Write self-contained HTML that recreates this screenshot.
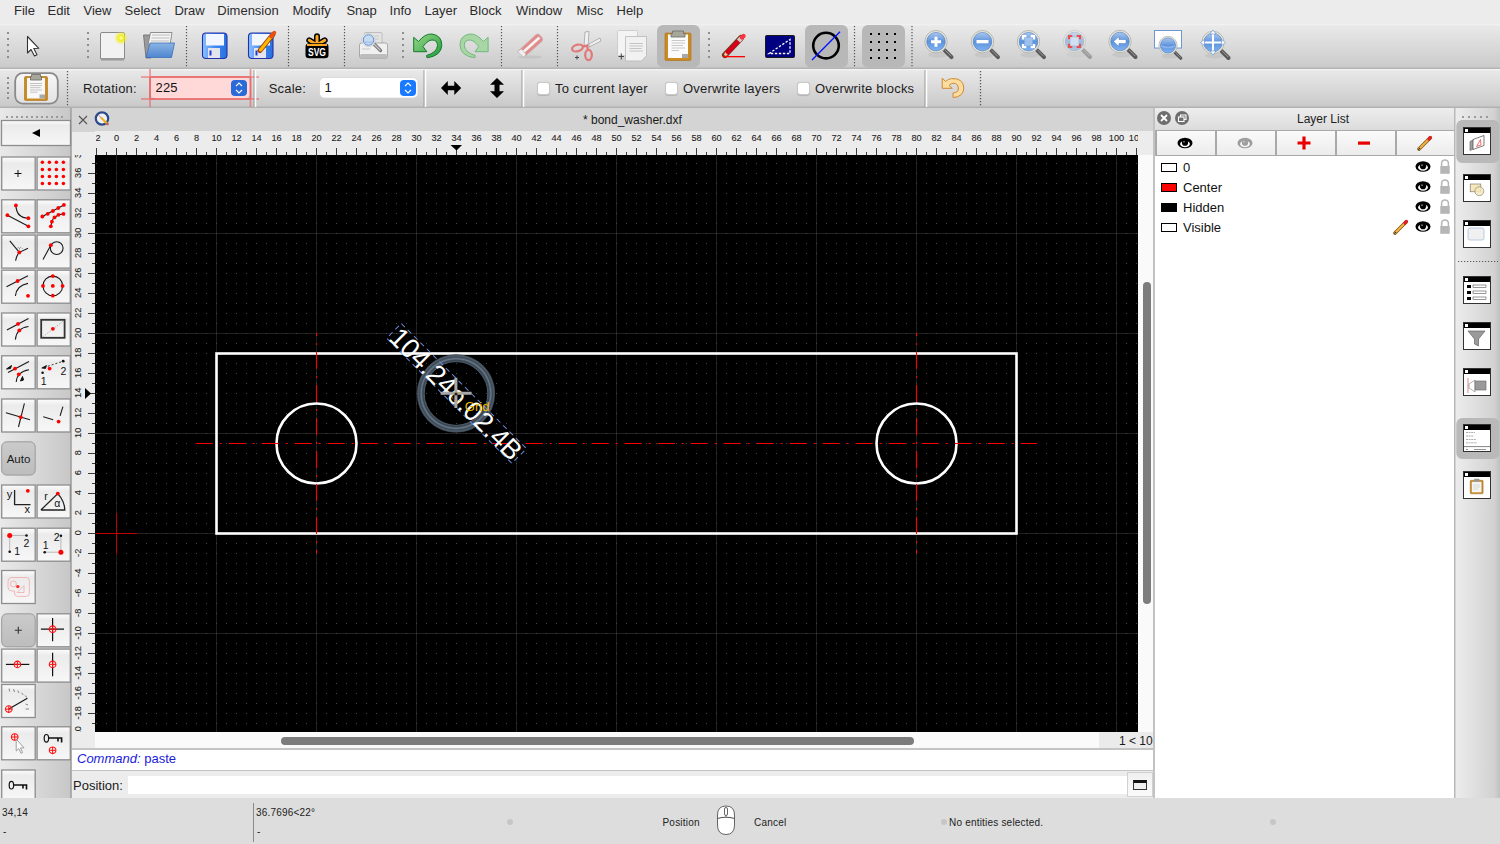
<!DOCTYPE html>
<html><head><meta charset="utf-8">
<style>
*{margin:0;padding:0;box-sizing:border-box}
html,body{width:1500px;height:844px;overflow:hidden;background:#ececec;font-family:"Liberation Sans",sans-serif;color:#222;position:relative}
.a{position:absolute}
.menu span{position:absolute;top:3px;font-size:13px;color:#2b2b2b;line-height:15px}
.tb1{left:0;top:24px;width:1500px;height:45px;background:linear-gradient(#f3f3f3 0,#e9e9e9 2px,#cbcbcb 43px,#b2b2b2 44px,#b6b6b6 45px)}
.tb2{left:0;top:69px;width:1500px;height:39px;background:linear-gradient(#f6f6f6 0,#e8e8e8 2px,#cacaca 37px,#b0b0b0 38px,#b3b3b3 39px)}
.grip{position:absolute;width:2px;background:repeating-linear-gradient(#999 0 2px,transparent 2px 5px)}
.sep{position:absolute;width:1px;background:repeating-linear-gradient(#6a6a6a 0 1px,transparent 1px 3px)}
.act{position:absolute;background:#b9b9b9;border-radius:6px}
.lbl{position:absolute;font-size:13px;color:#1d1d1d;line-height:15px;letter-spacing:.2px}
.tbox{left:0;top:108px;width:72px;height:690px;background:linear-gradient(90deg,#e9e9e9,#c8c8c8 69.5px,#a6a6a6 70.5px,#b4b4b4 72px)}
.btn{position:absolute;width:35px;height:34px;border:1px solid #8f8f8f;background:linear-gradient(#fbfbfb,#ebebeb 50%,#e3e3e3)}
.btn svg{position:absolute;left:0;top:0}
.chk{position:absolute;width:13px;height:13px;background:#fff;border:1px solid #c9c9c9;border-radius:3px;box-shadow:0 0.5px 1px rgba(0,0,0,.15)}
.status{left:0;top:798px;width:1500px;height:46px;background:#dddddd}
.st{position:absolute;font-size:10px;color:#222;line-height:12px;letter-spacing:.2px}
.lrow{position:absolute;left:0;width:298px;height:20px}
.lrow .sw{position:absolute;left:6px;top:4px;width:16px;height:9px;border:1px solid #000}
.lrow .nm{position:absolute;left:28px;top:1px;font-size:13px;color:#111;line-height:15px}
.dockic{position:absolute;left:9px;width:27.5px;height:28px;border:1px solid #333;background:#fff}
.dockic:before{content:"";position:absolute;left:0;top:0;right:0;height:4.5px;background:#000}
.dockic:after{content:"";position:absolute;left:1px;top:.8px;width:3px;height:3px;background:#fff}
</style></head><body>
<!-- menu bar -->
<div class="a menu" style="left:0;top:0;width:1500px;height:24px;background:#ececec">
<span style="left:14px">File</span><span style="left:47.5px">Edit</span><span style="left:83.5px">View</span><span style="left:124.5px">Select</span><span style="left:174.4px">Draw</span><span style="left:217.3px">Dimension</span><span style="left:292.5px">Modify</span><span style="left:346.4px">Snap</span><span style="left:389.6px">Info</span><span style="left:424.5px">Layer</span><span style="left:469.6px">Block</span><span style="left:516px">Window</span><span style="left:576.5px">Misc</span><span style="left:616.5px">Help</span>
</div>
<!-- toolbar 1 -->
<div class="a tb1">
<svg width="1500" height="45" viewBox="0 24 1500 45" style="position:absolute;left:0;top:0">
<defs>
<linearGradient id="gBlue" x1="0" y1="0" x2="0" y2="1"><stop offset="0" stop-color="#aac8ee"/><stop offset=".5" stop-color="#5d93dc"/><stop offset="1" stop-color="#7fb2ef"/></linearGradient>
<linearGradient id="gFolder" x1="0" y1="0" x2="0" y2="1"><stop offset="0" stop-color="#8cb4e4"/><stop offset="1" stop-color="#4f86cf"/></linearGradient>
<linearGradient id="gDisk" x1="0" y1="0" x2="1" y2="0"><stop offset="0" stop-color="#8ec0ff"/><stop offset=".5" stop-color="#3f8af2"/><stop offset="1" stop-color="#2a6fe0"/></linearGradient>
<linearGradient id="gUndo" x1="0" y1="0" x2="1" y2="1"><stop offset="0" stop-color="#9ad889"/><stop offset="1" stop-color="#1f9a3a"/></linearGradient>
<radialGradient id="gGlow"><stop offset="0" stop-color="#ffffd0"/><stop offset=".35" stop-color="#f2ee20"/><stop offset="1" stop-color="#f2ee20" stop-opacity="0"/></radialGradient>
<g id="lens">
 <ellipse cx="2" cy="13" rx="10" ry="3" fill="#000" opacity=".06"/><path d="M8.5 8.5L15.5 15.5" stroke="#5a5a5a" stroke-width="4" stroke-linecap="round"/><path d="M9.5 8.8L15 14.3" stroke="#9a9a9a" stroke-width="1" stroke-linecap="round"/>
 <circle cx="0" cy="0" r="11.2" fill="#e8e8e0" stroke="#b8b8b0" stroke-width="1"/>
 <circle cx="0" cy="0" r="9.3" fill="url(#gBlue)" stroke="#4a78b8" stroke-width=".6"/>
</g>
</defs>
<!-- grips / separators -->
<g fill="#8e8e8e">
 <rect x="7" y="32" width="2" height="2"/><rect x="7" y="38" width="2" height="2"/><rect x="7" y="44" width="2" height="2"/><rect x="7" y="50" width="2" height="2"/><rect x="7" y="56" width="2" height="2"/>
 <rect x="87" y="32" width="2" height="2"/><rect x="87" y="38" width="2" height="2"/><rect x="87" y="44" width="2" height="2"/><rect x="87" y="50" width="2" height="2"/><rect x="87" y="56" width="2" height="2"/>
 <rect x="402" y="32" width="2" height="2"/><rect x="402" y="38" width="2" height="2"/><rect x="402" y="44" width="2" height="2"/><rect x="402" y="50" width="2" height="2"/><rect x="402" y="56" width="2" height="2"/>
 <rect x="708" y="32" width="2" height="2"/><rect x="708" y="38" width="2" height="2"/><rect x="708" y="44" width="2" height="2"/><rect x="708" y="50" width="2" height="2"/><rect x="708" y="56" width="2" height="2"/>
</g>
<g stroke="#555" stroke-width="1.2" stroke-dasharray="1.2 1.8">
 <path d="M186.5 26V67M288.5 26V67M344.5 26V67M501.5 26V67M557.5 26V67M854.5 26V67M912 26V67"/>
</g>
<!-- select arrow -->
<path d="M27.5 36.5V53L31 49.5L34.5 56L37 54.8L33.8 48.5L38.8 48.3Z" fill="#fff" stroke="#333" stroke-width="1.1" stroke-linejoin="round"/>
<!-- new -->
<rect x="100.5" y="32.5" width="24" height="27" rx="1.5" fill="#f2f2f2" stroke="#8a8a8a" stroke-width="1"/>
<rect x="101" y="58" width="23" height="2.5" fill="#9a9a9a"/>
<circle cx="121" cy="38" r="7" fill="url(#gGlow)"/>
<!-- open -->
<path d="M143.5 35H150L151 58H146Z" fill="#9a9a9a" stroke="#6a6a6a" stroke-width=".8"/>
<path d="M150.5 32.5H172L170 45H148Z" fill="#f4f4f4" stroke="#777" stroke-width=".8"/>
<path d="M152 35H170M151.5 38H169.5M151 41H169" stroke="#bdbdbd" stroke-width="1"/>
<path d="M150 43H174.5L171.5 57.5H146Z" fill="url(#gFolder)" stroke="#3e6fb5" stroke-width=".8"/>
<!-- save -->
<rect x="202.5" y="33" width="24.5" height="25.5" rx="3.5" fill="url(#gDisk)" stroke="#2331a8" stroke-width="1.1"/>
<rect x="206" y="34" width="18" height="11.5" fill="#f2f6ff"/>
<rect x="208" y="48" width="12" height="10" fill="#e4e4ee"/>
<rect x="209.5" y="50.5" width="2" height="5" fill="#1d3dd8"/>
<!-- save as -->
<rect x="248.5" y="33" width="24.5" height="25.5" rx="3.5" fill="url(#gDisk)" stroke="#2331a8" stroke-width="1.1"/>
<rect x="252" y="34" width="18" height="11.5" fill="#f2f6ff"/>
<rect x="254" y="48" width="12" height="10" fill="#e4e4ee"/>
<rect x="255.5" y="50.5" width="2" height="5" fill="#1d3dd8"/>
<path d="M260 50.5L273 34.5" stroke="#9b3a10" stroke-width="5" stroke-linecap="round"/>
<path d="M260.5 50L272.5 35" stroke="#ffb800" stroke-width="3.2" stroke-linecap="round"/>
<path d="M271 36.5L274.5 32.5" stroke="#e85010" stroke-width="3.5" stroke-linecap="round"/>
<!-- svg -->
<g>
<path d="M317 45L317 36.3M317 45L309.3 40.3M317 45L324.7 40.3" stroke="#000" stroke-width="6" stroke-linecap="round"/>
<path d="M317 45L317 36.3M317 45L309.3 40.3M317 45L324.7 40.3" stroke="#f9a825" stroke-width="3" stroke-linecap="round"/>
<path d="M305.5 47Q305.5 43.3 309 43.3H325Q328.5 43.3 328.5 47V55Q328.5 58.3 325 58.3H309Q305.5 58.3 305.5 55Z" fill="#000"/>
<rect x="307" y="44" width="20" height="2" fill="#f9a825"/>
<text x="317" y="56.3" font-family="Liberation Sans" font-weight="bold" font-size="11" text-anchor="middle" fill="#fff" textLength="18" lengthAdjust="spacingAndGlyphs">SVG</text>
</g>
<!-- print preview -->
<rect x="364.5" y="32.5" width="17.5" height="14" rx="1" fill="#e4e4e4" stroke="#b4b4b4" stroke-width=".8"/>
<path d="M367 36H379M367 39H379" stroke="#c8c8c8" stroke-width="1"/>
<path d="M359.5 45Q359.5 43 361.5 43H385.5Q387.5 43 387.5 45V56.5Q387.5 58.5 385.5 58.5H361.5Q359.5 58.5 359.5 56.5Z" fill="#f0f0f0" stroke="#9a9a9a" stroke-width=".8"/>
<rect x="360" y="54" width="27" height="4.5" rx="1.5" fill="#bdbdbd"/>
<path d="M362 49H370" stroke="#d0d0d0" stroke-width="1.2"/>
<path d="M372.5 42.5L380.5 50.5" stroke="#7a7a7a" stroke-width="3.4" stroke-linecap="round"/>
<path d="M372.5 42.5L380 50" stroke="#c8c8c8" stroke-width="1.2" stroke-linecap="round"/>
<circle cx="368.5" cy="40" r="6.6" fill="#fff" stroke="#c8c8c8" stroke-width=".8"/>
<circle cx="368.5" cy="40" r="5.3" fill="#c6daf2" stroke="#5c8ed0" stroke-width="1"/>
<path d="M364.5 41.5Q368.5 43.5 372.5 41.5" stroke="#a8c4ea" stroke-width="1.5" fill="none"/>
<!-- undo -->
<path d="M418.5 41.5Q425 33.5 432 34Q442 35.5 441.8 45.5Q441 56 427 57.8L426.5 55.5Q437 52.5 437.5 45.5Q437.5 40 432 40Q428 40 423 46.5L426.8 51.7H413.7V37.3Z" fill="url(#gUndo)" stroke="#147a2e" stroke-width="1"/>
<!-- redo -->
<path d="M483.3 41.5Q476.8 33.5 469.8 34Q459.8 35.5 460 45.5Q460.8 56 474.8 57.8L475.3 55.5Q464.8 52.5 464.3 45.5Q464.3 40 469.8 40Q473.8 40 478.8 46.5L475 51.7H488.1V37.3Z" fill="#a8d6a4" stroke="#72b87e" stroke-width="1"/>
<!-- eraser -->
<ellipse cx="530" cy="57" rx="12" ry="1.6" fill="#bdbdbd" opacity=".6"/>
<path d="M517.5 51.5L536 34.5Q538 33 540 35L542.5 38Q543.5 40 542 41.5L524 57.5Z" fill="#e38a8a" stroke="#c4c4c4" stroke-width=".6"/>
<path d="M520.5 54.5L539.5 37.5" stroke="#f4f4f4" stroke-width="2.6"/>
<path d="M517.5 51.5L521.5 49L526 54L524 57.5Z" fill="#efefef" stroke="#b0b0b0" stroke-width=".6"/>
<!-- scissors -->
<path d="M585 32L589 31.5L588 46L584 47Z" fill="#f2f2f2" stroke="#9a9a9a" stroke-width=".7"/>
<path d="M589 44L600 38L601 41L589 47Z" fill="#f2f2f2" stroke="#9a9a9a" stroke-width=".7"/>
<ellipse cx="577.5" cy="48" rx="5.5" ry="3.2" transform="rotate(-15 577.5 48)" fill="none" stroke="#e07a7a" stroke-width="2.3"/>
<ellipse cx="588.5" cy="55" rx="3.3" ry="5.2" fill="none" stroke="#e07a7a" stroke-width="2.3"/>
<path d="M582 46.5L587 45.5L588 50" stroke="#e07a7a" stroke-width="2.3" fill="none"/>
<path d="M575 57.5H579M577 55.5V59.5" stroke="#444" stroke-width="1"/>
<!-- copy -->
<rect x="617.5" y="30.5" width="20" height="25" rx="1" fill="#f4f4f4" stroke="#c6c6c6" stroke-width=".8"/>
<path d="M625.5 36.5H646.5V55.5L641.5 61H625.5Z" fill="#f1f1f1" stroke="#b8b8b8" stroke-width=".8"/>
<path d="M629.5 43.5H643M629.5 46H643M629.5 48.5H641.5M629.5 51H643" stroke="#c4c4c4" stroke-width="1"/>
<path d="M618.5 56.5H624M621.3 53.5V59.5" stroke="#444" stroke-width="1"/>
<!-- paste active -->
<rect x="657" y="25" width="43" height="42.5" rx="6" fill="#b8b8b8"/>
<rect x="665" y="33" width="26" height="27.5" rx="1.2" fill="#cc8a20" stroke="#a8701a" stroke-width=".6"/>
<rect x="668" y="34.5" width="20" height="23.5" fill="#fbfbfb"/>
<path d="M671.5 40.5H685M671.5 43H685M671.5 45.5H683M671.5 48H685M671.5 50.5H679" stroke="#c8c8c8" stroke-width="1"/>
<path d="M682 58V54H688V58Z" fill="#a8a8a8"/>
<path d="M672.5 31H683.5V33.5H685V37H671V33.5H672.5Z" fill="#a7a79b" stroke="#6a6a62" stroke-width=".8"/>
<!-- pencil -->
<path d="M725 55L741 38" stroke="#6b3a10" stroke-width="6" stroke-linecap="round"/>
<path d="M725.5 54.5L741 38.5" stroke="#d8001c" stroke-width="4.2" stroke-linecap="round"/>
<path d="M738.5 41L742 37.5" stroke="#cfcfcf" stroke-width="4.4"/>
<path d="M742 37.5L743.5 36" stroke="#ff3040" stroke-width="4.4" stroke-linecap="round"/>
<path d="M723.5 56.5L725 52L728 55Z" fill="#f0d0a0"/>
<path d="M723 57L724 55L725 56Z" fill="#111"/>
<rect x="723" y="56" width="22" height="1.3" fill="#ff0000"/>
<!-- triangle box -->
<rect x="765.5" y="35.5" width="29" height="22" rx="1" fill="#000080" stroke="#1a1a1a" stroke-width="1"/>
<path d="M769 53.5L790 39.5V53.5Z" fill="none" stroke="#fff" stroke-width="1.3" stroke-dasharray="2.4 1.6"/>
<!-- circle active -->
<rect x="805" y="25" width="43" height="42.5" rx="6" fill="#b8b8b8"/>
<circle cx="826" cy="45.6" r="12.8" fill="none" stroke="#000" stroke-width="2.6"/>
<path d="M812 60L840 31.8" stroke="#0010ff" stroke-width="1.3"/>
<!-- grid active -->
<rect x="862" y="25" width="43" height="42.5" rx="6" fill="#b8b8b8"/>
<g fill="#000">
<rect x="870" y="33" width="2" height="2"/><rect x="878" y="33" width="2" height="2"/><rect x="886" y="33" width="2" height="2"/><rect x="894" y="33" width="2" height="2"/>
<rect x="870" y="41" width="2" height="2"/><rect x="878" y="41" width="2" height="2"/><rect x="886" y="41" width="2" height="2"/><rect x="894" y="41" width="2" height="2"/>
<rect x="870" y="49" width="2" height="2"/><rect x="878" y="49" width="2" height="2"/><rect x="886" y="49" width="2" height="2"/><rect x="894" y="49" width="2" height="2"/>
<rect x="870" y="57" width="2" height="2"/><rect x="878" y="57" width="2" height="2"/><rect x="886" y="57" width="2" height="2"/><rect x="894" y="57" width="2" height="2"/>
</g>
<!-- zoom in -->
<use href="#lens" x="936" y="41.7"/>
<path d="M931 41.7H941M936 36.7V46.7" stroke="#fff" stroke-width="3"/>
<use href="#lens" x="982.5" y="41.7"/>
<rect x="976.5" y="40" width="12" height="3.3" fill="#fff"/>
<use href="#lens" x="1028.5" y="41.7"/>
<rect x="1024.5" y="37.7" width="8" height="8" fill="#b8d0f0" opacity=".7"/><path d="M1023 39.5V36.2H1026.3M1030.7 36.2H1034V39.5M1034 43.9V47.2H1030.7M1026.3 47.2H1023V43.9" stroke="#fff" stroke-width="2.2" fill="none"/>
<g opacity=".45"><use href="#lens" x="1074.5" y="41.5"/></g>
<rect x="1070.5" y="37.5" width="8" height="8" fill="#dde8f6" opacity=".8"/><path d="M1069 39.3V36H1072.3M1076.7 36H1080V39.3M1080 43.7V47H1076.7M1072.3 47H1069V43.7" stroke="#e85050" stroke-width="2.2" fill="none"/>
<use href="#lens" x="1120" y="41.5"/>
<path d="M1113.5 41.5L1119 36.5V39.5H1126V43.5H1119V46.5Z" fill="#fff" stroke="#4a78b8" stroke-width=".5"/>
<rect x="1154.5" y="30.5" width="27" height="17.5" fill="#fff" stroke="#6a96d8" stroke-width="1"/>
<g transform="translate(1168 45.5) scale(.82)"><use href="#lens"/></g><path d="M1161 46Q1168 49 1175 46" stroke="#8ab4ea" stroke-width="1.5" fill="none"/>
<use href="#lens" x="1213" y="42.5"/>
<path d="M1213 31V54M1201 42.5H1225" stroke="#fff" stroke-width="2"/>
<path d="M1213 30L1210 34H1216ZM1213 55L1210 51H1216ZM1200.5 42.5L1204.5 39.5V45.5ZM1225.5 42.5L1221.5 39.5V45.5Z" fill="#fff" stroke="#5a88cc" stroke-width=".6"/>
</svg>

</div>
<!-- toolbar 2 -->
<div class="a tb2">
<svg width="1500" height="39" viewBox="0 69 1500 39" style="position:absolute;left:0;top:0">
<defs>
<linearGradient id="gBtn2" x1="0" y1="0" x2="0" y2="1"><stop offset="0" stop-color="#f7f7f7"/><stop offset="1" stop-color="#e2e2e2"/></linearGradient>
</defs>
<g fill="#8e8e8e"><rect x="7" y="77" width="2" height="2"/><rect x="7" y="82" width="2" height="2"/><rect x="7" y="87" width="2" height="2"/><rect x="7" y="92" width="2" height="2"/><rect x="7" y="97" width="2" height="2"/></g>
<rect x="15.2" y="73.2" width="42.6" height="30.4" rx="7.5" fill="url(#gBtn2)" stroke="#8a8a8a" stroke-width="1.8"/>
<rect x="24.5" y="76.5" width="23" height="24" rx="1.2" fill="#cc8a20" stroke="#a8701a" stroke-width=".6"/>
<rect x="27" y="78" width="18" height="20.5" fill="#f8f8f8"/>
<path d="M30 83.5H42M30 85.6H42M30 87.7H40.5M30 90H42M30 92.2H37.5" stroke="#c2c2c2" stroke-width="1"/>
<path d="M39.5 98.5V94.5H45V98.5Z" fill="#a8a8a8"/>
<path d="M31.5 74.5H40.5V76.5H41.5V80H30.5V76.5H31.5Z" fill="#a7a79b" stroke="#6a6a62" stroke-width=".8"/>
<path d="M67.5 71V106" stroke="#555" stroke-width="1.2" stroke-dasharray="1.2 1.8"/>
<!-- rotation field with red guides -->
<path d="M150 69V107M250.5 69V107M141 77H259M141 99H259" stroke="#ee5a5a" stroke-opacity=".65" stroke-width="1.6"/>
<rect x="151" y="78" width="98.5" height="20.5" rx="5" fill="#ffd8d8"/>
<path d="M150 77H250.5M150 99H250.5M150 77V99M250.5 77V99" stroke="#ec6868" stroke-width="1.6"/>
<rect x="231" y="80" width="16" height="16" rx="4" fill="#2a6ad8"/>
<path d="M236 86L239 83L242 86M236 90L239 93L242 90" stroke="#fff" stroke-width="1.1" fill="none"/>
<path d="M254 70V107" stroke="#9a9a9a" stroke-width="1"/><path d="M255.5 70V107" stroke="#fff" stroke-width="1.5"/>
<!-- scale -->
<rect x="319.5" y="77.5" width="98.5" height="20.5" rx="5" fill="#fff" stroke="#d6d6d6" stroke-width=".8"/>
<rect x="400" y="80" width="16" height="16" rx="4" fill="#1a7aff"/>
<path d="M405 86L408 83L411 86M405 90L408 93L411 90" stroke="#fff" stroke-width="1.1" fill="none"/>
<path d="M424 70V107" stroke="#9a9a9a" stroke-width="1"/><path d="M425.5 70V107" stroke="#fff" stroke-width="1.5"/>
<!-- arrows -->
<path d="M441 88L447.8 81V85.7H454.3V81L461.2 88L454.3 95V90.3H447.8V95Z" fill="#000"/>
<path d="M497 78L504 84.7H499.5V91.3H504L497 98L490 91.3H494.5V84.7H490Z" fill="#000"/>
<path d="M522 70V107" stroke="#9a9a9a" stroke-width="1"/><path d="M523.5 70V107" stroke="#fff" stroke-width="1.5"/>
<path d="M925 70V107" stroke="#9a9a9a" stroke-width="1"/><path d="M926.5 70V107" stroke="#fff" stroke-width="1.5"/>
<!-- orange undo -->
<path d="M942.2 78L945.5 81.5Q948 79 951.5 78.6Q963.5 78 963.8 88Q963.5 97 953 97.5V93Q959 92.5 958.3 88Q958 83.5 953.5 83.3Q951 83.3 949 85.5L952.3 88.3H942.2Z" fill="#fddca0" stroke="#cf8a33" stroke-width="1"/>
<path d="M980.5 71V106" stroke="#555" stroke-width="1.3" stroke-dasharray="1.3 1.7"/>
</svg>
<div class="lbl" style="left:83px;top:12px">Rotation:</div>
<div class="lbl" style="left:155.5px;top:11px;color:#111">225</div>
<div class="lbl" style="left:268.7px;top:12px">Scale:</div>
<div class="lbl" style="left:324.5px;top:11px;color:#111">1</div>
<div class="chk" style="left:536.5px;top:12.5px"></div><div class="lbl" style="left:555px;top:12px">To current layer</div>
<div class="chk" style="left:664.5px;top:12.5px"></div><div class="lbl" style="left:683px;top:12px">Overwrite layers</div>
<div class="chk" style="left:796.5px;top:12.5px"></div><div class="lbl" style="left:815px;top:12px">Overwrite blocks</div>

</div>
<!-- left toolbox -->
<div class="a tbox">
<svg width="72" height="690" viewBox="0 108 72 690" style="position:absolute;left:0;top:0">
<defs>
<linearGradient id="gTB" x1="0" y1="0" x2="0" y2="1"><stop offset="0" stop-color="#fdfdfd"/><stop offset=".12" stop-color="#f2f2f2"/><stop offset=".2" stop-color="#ebebeb"/><stop offset="1" stop-color="#f7f7f7"/></linearGradient>
<linearGradient id="gTBa" x1="0" y1="0" x2="0" y2="1"><stop offset="0" stop-color="#cacaca"/><stop offset="1" stop-color="#bdbdbd"/></linearGradient>
<g id="xh"><circle r="3.3" fill="none" stroke="#ff1010" stroke-width="1.1"/><path d="M-3.3 0H3.3M0 -3.3V3.3" stroke="#ff1010" stroke-width="1"/></g>
</defs>
<rect x="6" y="116" width="2" height="2" fill="#9a9a9a"/>
<rect x="11" y="116" width="2" height="2" fill="#9a9a9a"/>
<rect x="16" y="116" width="2" height="2" fill="#9a9a9a"/>
<rect x="21" y="116" width="2" height="2" fill="#9a9a9a"/>
<rect x="26" y="116" width="2" height="2" fill="#9a9a9a"/>
<rect x="31" y="116" width="2" height="2" fill="#9a9a9a"/>
<rect x="36" y="116" width="2" height="2" fill="#9a9a9a"/>
<rect x="41" y="116" width="2" height="2" fill="#9a9a9a"/>
<rect x="46" y="116" width="2" height="2" fill="#9a9a9a"/>
<rect x="51" y="116" width="2" height="2" fill="#9a9a9a"/>
<rect x="56" y="116" width="2" height="2" fill="#9a9a9a"/>
<rect x="61" y="116" width="2" height="2" fill="#9a9a9a"/>
<rect x="1.5" y="120.5" width="69" height="25" fill="url(#gTB)" stroke="#8d8d8d" stroke-width="1.3"/>
<path d="M32 133L40 129V137Z" fill="#000"/>
<rect x="1.7" y="157.0" width="33.5" height="33" fill="url(#gTB)" stroke="#8d8d8d" stroke-width="1.3"/>
<rect x="37.1" y="157.0" width="33.2" height="33" fill="url(#gTB)" stroke="#8d8d8d" stroke-width="1.3"/>
<rect x="1.7" y="199.8" width="33.5" height="33" fill="url(#gTB)" stroke="#8d8d8d" stroke-width="1.3"/>
<rect x="37.1" y="199.8" width="33.2" height="33" fill="url(#gTB)" stroke="#8d8d8d" stroke-width="1.3"/>
<rect x="1.7" y="235.1" width="33.5" height="33" fill="url(#gTB)" stroke="#8d8d8d" stroke-width="1.3"/>
<rect x="37.1" y="235.1" width="33.2" height="33" fill="url(#gTB)" stroke="#8d8d8d" stroke-width="1.3"/>
<rect x="1.7" y="270.2" width="33.5" height="33" fill="url(#gTB)" stroke="#8d8d8d" stroke-width="1.3"/>
<rect x="37.1" y="270.2" width="33.2" height="33" fill="url(#gTB)" stroke="#8d8d8d" stroke-width="1.3"/>
<rect x="1.7" y="313.0" width="33.5" height="33" fill="url(#gTB)" stroke="#8d8d8d" stroke-width="1.3"/>
<rect x="37.1" y="313.0" width="33.2" height="33" fill="url(#gTB)" stroke="#8d8d8d" stroke-width="1.3"/>
<rect x="1.7" y="355.8" width="33.5" height="33" fill="url(#gTB)" stroke="#8d8d8d" stroke-width="1.3"/>
<rect x="37.1" y="355.8" width="33.2" height="33" fill="url(#gTB)" stroke="#8d8d8d" stroke-width="1.3"/>
<rect x="1.7" y="399.0" width="33.5" height="33" fill="url(#gTB)" stroke="#8d8d8d" stroke-width="1.3"/>
<rect x="37.1" y="399.0" width="33.2" height="33" fill="url(#gTB)" stroke="#8d8d8d" stroke-width="1.3"/>
<rect x="1.7" y="441.8" width="33.5" height="33.3" rx="5" fill="url(#gTBa)" stroke="#9a9a9a" stroke-width="1"/>
<rect x="1.7" y="485.0" width="33.5" height="33" fill="url(#gTB)" stroke="#8d8d8d" stroke-width="1.3"/>
<rect x="37.1" y="485.0" width="33.2" height="33" fill="url(#gTB)" stroke="#8d8d8d" stroke-width="1.3"/>
<rect x="1.7" y="528.2" width="33.5" height="33" fill="url(#gTB)" stroke="#8d8d8d" stroke-width="1.3"/>
<rect x="37.1" y="528.2" width="33.2" height="33" fill="url(#gTB)" stroke="#8d8d8d" stroke-width="1.3"/>
<rect x="1.7" y="570.5" width="33.5" height="33" fill="url(#gTB)" stroke="#8d8d8d" stroke-width="1.3"/>
<rect x="1.7" y="613.8" width="33.5" height="33" rx="5" fill="url(#gTBa)" stroke="#9a9a9a" stroke-width="1"/>
<rect x="37.1" y="613.8" width="33.2" height="33" fill="url(#gTB)" stroke="#8d8d8d" stroke-width="1.3"/>
<rect x="1.7" y="649.1" width="33.5" height="33" fill="url(#gTB)" stroke="#8d8d8d" stroke-width="1.3"/>
<rect x="37.1" y="649.1" width="33.2" height="33" fill="url(#gTB)" stroke="#8d8d8d" stroke-width="1.3"/>
<rect x="1.7" y="684.5" width="33.5" height="33" fill="url(#gTB)" stroke="#8d8d8d" stroke-width="1.3"/>
<rect x="1.7" y="726.8" width="33.5" height="33" fill="url(#gTB)" stroke="#8d8d8d" stroke-width="1.3"/>
<rect x="37.1" y="726.8" width="33.2" height="33" fill="url(#gTB)" stroke="#8d8d8d" stroke-width="1.3"/>
<rect x="1.7" y="770.0" width="33.5" height="29" fill="url(#gTB)" stroke="#8d8d8d" stroke-width="1.3"/>
<path d="M14.5 173.5H21.5M18 170V177" stroke="#111" stroke-width="1" fill="none" />
<circle cx="42.4" cy="162.3" r="1.75" fill="#ff0000"/>
<circle cx="42.4" cy="169.4" r="1.75" fill="#ff0000"/>
<circle cx="42.4" cy="176.5" r="1.75" fill="#ff0000"/>
<circle cx="42.4" cy="183.5" r="1.75" fill="#ff0000"/>
<circle cx="49.4" cy="162.3" r="1.75" fill="#ff0000"/>
<circle cx="49.4" cy="169.4" r="1.75" fill="#ff0000"/>
<circle cx="49.4" cy="176.5" r="1.75" fill="#ff0000"/>
<circle cx="49.4" cy="183.5" r="1.75" fill="#ff0000"/>
<circle cx="56.4" cy="162.3" r="1.75" fill="#ff0000"/>
<circle cx="56.4" cy="169.4" r="1.75" fill="#ff0000"/>
<circle cx="56.4" cy="176.5" r="1.75" fill="#ff0000"/>
<circle cx="56.4" cy="183.5" r="1.75" fill="#ff0000"/>
<circle cx="63.4" cy="162.3" r="1.75" fill="#ff0000"/>
<circle cx="63.4" cy="169.4" r="1.75" fill="#ff0000"/>
<circle cx="63.4" cy="176.5" r="1.75" fill="#ff0000"/>
<circle cx="63.4" cy="183.5" r="1.75" fill="#ff0000"/>
<path d="M7.4 215.2L28.4 226.3" stroke="#1a1a1a" stroke-width="1.1" fill="none" />
<path d="M15.9 205.4Q16.5 218 28.4 218.2" stroke="#1a1a1a" stroke-width="1.1" fill="none" />
<circle cx="7.4" cy="215.2" r="1.9" fill="#ff0000"/>
<circle cx="28.4" cy="226.3" r="1.9" fill="#ff0000"/>
<circle cx="15.9" cy="205.4" r="1.9" fill="#ff0000"/>
<circle cx="28.4" cy="218.2" r="1.9" fill="#ff0000"/>
<path d="M42.4 216.5L63.9 204.9" stroke="#1a1a1a" stroke-width="1.1" fill="none" />
<path d="M50.8 226.3L51.9 221.7Q53 218 54.5 217.4L58.5 214.8L63.5 213.9" stroke="#1a1a1a" stroke-width="1.1" fill="none" />
<circle cx="42.4" cy="216.5" r="1.9" fill="#ff0000"/>
<circle cx="47.7" cy="213.8" r="1.9" fill="#ff0000"/>
<circle cx="52.9" cy="211" r="1.9" fill="#ff0000"/>
<circle cx="58.3" cy="208" r="1.9" fill="#ff0000"/>
<circle cx="63.9" cy="204.9" r="1.9" fill="#ff0000"/>
<circle cx="50.8" cy="226.3" r="1.9" fill="#ff0000"/>
<circle cx="51.9" cy="221.7" r="1.9" fill="#ff0000"/>
<circle cx="54.5" cy="217.4" r="1.9" fill="#ff0000"/>
<circle cx="58.5" cy="214.8" r="1.9" fill="#ff0000"/>
<circle cx="63.5" cy="213.9" r="1.9" fill="#ff0000"/>
<path d="M9.8 240.9L19.3 252.4L28 248.2" stroke="#1a1a1a" stroke-width="1.1" fill="none" />
<path d="M19.3 252.4Q16.2 256 15.6 260.8" stroke="#1a1a1a" stroke-width="1.1" fill="none" />
<path d="M16.5 249Q19.5 245.5 23 249" stroke="#555" stroke-width="0.7" fill="none" stroke-dasharray="1 1"/>
<circle cx="19.5" cy="248.8" r="0.5" fill="#333"/>
<circle cx="19.3" cy="252.4" r="1.9" fill="#ff0000"/>
<circle cx="56.7" cy="248.1" r="6.4" fill="none" stroke="#1a1a1a" stroke-width="1.1"/>
<path d="M43 259.5L50.8 245.2" stroke="#1a1a1a" stroke-width="1.1" fill="none" />
<circle cx="50.8" cy="245.2" r="1.9" fill="#ff0000"/>
<path d="M6.5 286.7L28 275.8" stroke="#1a1a1a" stroke-width="1.1" fill="none" />
<circle cx="17.6" cy="281" r="1.9" fill="#ff0000"/>
<path d="M15.4 296Q16.5 285.5 28 283.4" stroke="#1a1a1a" stroke-width="1.1" fill="none" />
<circle cx="28" cy="295.8" r="1.9" fill="#ff0000"/>
<circle cx="52.8" cy="285.9" r="9.8" fill="none" stroke="#1a1a1a" stroke-width="1.1"/>
<circle cx="52.8" cy="285.9" r="1.9" fill="#ff0000"/>
<circle cx="52.8" cy="276.1" r="1.9" fill="#ff0000"/>
<circle cx="52.8" cy="295.7" r="1.9" fill="#ff0000"/>
<circle cx="43" cy="285.9" r="1.9" fill="#ff0000"/>
<circle cx="62.6" cy="285.9" r="1.9" fill="#ff0000"/>
<path d="M6.9 329.9L28.5 318.5" stroke="#1a1a1a" stroke-width="1.1" fill="none" />
<circle cx="18" cy="323.9" r="1.9" fill="#ff0000"/>
<path d="M15.4 339.6Q16.5 328 28.5 326.5" stroke="#1a1a1a" stroke-width="1.1" fill="none" />
<circle cx="19.3" cy="330.4" r="1.9" fill="#ff0000"/>
<rect x="41.2" y="319.8" width="23.4" height="18" fill="none" stroke="#333" stroke-width="1.8"/>
<path d="M42.5 337L63.5 321" stroke="#999" stroke-width="0.8" fill="none" stroke-dasharray="1.5 1.5"/>
<circle cx="52.9" cy="328.8" r="1.9" fill="#ff0000"/>
<path d="M8 372.4L29 361.6" stroke="#1a1a1a" stroke-width="1.1" fill="none" />
<circle cx="15.1" cy="368.6" r="1.9" fill="#ff0000"/>
<path d="M16.2 382Q17 371.5 29 369.7" stroke="#1a1a1a" stroke-width="1.1" fill="none" />
<circle cx="18.8" cy="374.3" r="1.9" fill="#ff0000"/>
<path d="M6.5 369L11.5 365.5L10.5 368.5Z M20.5 381L22.5 376.5L23.5 380Z" fill="#111" stroke="#111" stroke-width="1"/>
<path d="M44 367.5L63.2 361.2" stroke="#222" stroke-width="0.9" fill="none" stroke-dasharray="2 2"/>
<circle cx="49.6" cy="368.6" r="1.9" fill="#ff0000"/>
<circle cx="63.2" cy="361.2" r="1.4" fill="#111"/>
<circle cx="42.6" cy="372.8" r="1.3" fill="#111"/>
<path d="M41.8 368L46.5 365.5L45.5 368.5Z" fill="#111" stroke="#111" stroke-width=".8"/>
<text x="40.8" y="384.5" font-family="Liberation Sans" font-size="10.5" fill="#111" text-anchor="start">1</text>
<text x="60.5" y="374.8" font-family="Liberation Sans" font-size="10.5" fill="#111" text-anchor="start">2</text>
<path d="M5.9 412.8L30 419.8" stroke="#1a1a1a" stroke-width="1.1" fill="none" />
<path d="M24.4 403.3L18.5 427" stroke="#1a1a1a" stroke-width="1.1" fill="none" />
<circle cx="20.8" cy="417.2" r="1.9" fill="#ff0000"/>
<path d="M43.2 416.7L53.2 419.8" stroke="#1a1a1a" stroke-width="1.1" fill="none" />
<path d="M62.9 406.7L60.1 415.9" stroke="#1a1a1a" stroke-width="1.1" fill="none" />
<circle cx="58.6" cy="421.6" r="1.9" fill="#ff0000"/>
<text x="18.5" y="462.5" font-family="Liberation Sans" font-size="11.5" fill="#1a1a1a" text-anchor="middle">Auto</text>
<text x="6.8" y="497.5" font-family="Liberation Sans" font-size="11" fill="#111" text-anchor="start">y</text>
<path d="M14.6 490V504.7H30.5" stroke="#222" stroke-width="1.3" fill="none" />
<text x="24.5" y="513.2" font-family="Liberation Sans" font-size="11" fill="#111" text-anchor="start">x</text>
<circle cx="27.8" cy="490.8" r="1.9" fill="#ff0000"/>
<path d="M40.9 510L57.8 493.6Q64.5 501 64.8 510H40.9" stroke="#222" stroke-width="1.3" fill="none" />
<text x="44.3" y="500.3" font-family="Liberation Sans" font-size="10.5" fill="#111" text-anchor="start">r</text>
<text x="54.3" y="507.3" font-family="Liberation Sans" font-size="10.5" fill="#111" text-anchor="start">α</text>
<circle cx="57.8" cy="493.6" r="1.9" fill="#ff0000"/>
<path d="M9.7 535.5H26.5M9.7 535.5V551.7" stroke="#aaa" stroke-width="0.8" fill="none" />
<circle cx="9.7" cy="535.5" r="2.5" fill="#ff0000"/>
<circle cx="26.5" cy="535.5" r="1.3" fill="#111"/>
<circle cx="9.7" cy="551.7" r="1.3" fill="#111"/>
<text x="14.2" y="554.8" font-family="Liberation Sans" font-size="10.5" fill="#111" text-anchor="start">1</text>
<text x="23.5" y="547" font-family="Liberation Sans" font-size="10.5" fill="#111" text-anchor="start">2</text>
<path d="M60.9 535.8V552.2H44.7" stroke="#aaa" stroke-width="0.8" fill="none" />
<circle cx="60.9" cy="552.2" r="2.5" fill="#ff0000"/>
<circle cx="60.9" cy="535.8" r="1.3" fill="#111"/>
<circle cx="44.7" cy="552.2" r="1.3" fill="#111"/>
<text x="53.8" y="541.2" font-family="Liberation Sans" font-size="10.5" fill="#111" text-anchor="start">2</text>
<text x="42.8" y="549" font-family="Liberation Sans" font-size="10.5" fill="#111" text-anchor="start">1</text>
<path d="M8 582Q8 577.5 12 577.5H26.5Q29.3 577.5 29.3 580.5V593.5Q29.3 596.4 26.5 596.4H17.5Q14.5 596.4 14.5 593V591H12Q8 591 8 587Z" fill="none" stroke="#f2a8a8" stroke-width=".8"/>
<circle cx="13.4" cy="584" r="3" fill="none" stroke="#f2a8a8" stroke-width=".8"/>
<path d="M17 592.5L24 585.5V592.5Z" fill="none" stroke="#f2a8a8" stroke-width=".8"/>
<circle cx="17.8" cy="586.6" r="1.7" fill="#ff2a2a"/>
<path d="M14.8 630.2H21.8M18.3 626.7V633.7" stroke="#333" stroke-width="1.1" fill="none" />
<path d="M40.9 629.2H64M52.6 618V641.2" stroke="#111" stroke-width="1.2" fill="none" />
<use href="#xh" x="52.6" y="629.2"/>
<path d="M5.9 664.4H29.3" stroke="#111" stroke-width="1.2" fill="none" />
<use href="#xh" x="17.4" y="664.4"/>
<path d="M52.6 652.8V676.2" stroke="#111" stroke-width="1.2" fill="none" />
<use href="#xh" x="52.6" y="664.4"/>
<path d="M8.8 709.1L27.4 698.3" stroke="#111" stroke-width="1.1" fill="none" />
<path d="M9.2 688.5L9.5 691.5" stroke="#888" stroke-width="1" fill="none" />
<path d="M13.5 689L14.5 692" stroke="#888" stroke-width="1" fill="none" />
<path d="M17.8 690.5L19 693" stroke="#888" stroke-width="1" fill="none" />
<path d="M21.5 692.8L23.3 695" stroke="#888" stroke-width="1" fill="none" />
<path d="M24.8 695.5L27 697.3" stroke="#888" stroke-width="1" fill="none" />
<path d="M25.5 704L28 705" stroke="#888" stroke-width="1" fill="none" />
<path d="M25.5 709H29" stroke="#888" stroke-width="1" fill="none" />
<use href="#xh" x="8.8" y="709.1"/>
<use href="#xh" x="14.7" y="737"/>
<path d="M16.2 739V751L18.8 748.7L21 753.3L22.6 752.5L20.5 748L24 747.8Z" fill="#fafafa" stroke="#8a8a8a" stroke-width=".8" stroke-linejoin="round"/>
<ellipse cx="46.4" cy="738.3" rx="2.2" ry="3.8" fill="none" stroke="#111" stroke-width="1.2"/>
<path d="M48.6 738H61.6V742.4M58 738V741.5" stroke="#111" stroke-width="1.6" fill="none" />
<use href="#xh" x="52.6" y="750.3"/>
<ellipse cx="11.4" cy="785.2" rx="2.2" ry="3.8" fill="none" stroke="#111" stroke-width="1.2"/>
<path d="M13.6 785H26.5V789.4M23 785V788.5" stroke="#111" stroke-width="1.6" fill="none" />
</svg>
</div>
<!-- MDI -->
<div class="a" style="left:72px;top:108px;width:1083px;height:690px;background:#ececec">
  <div class="a" style="left:0;top:0;width:1083px;height:23.5px;background:#d4d4d4"></div>
  <svg width="40" height="23" style="position:absolute;left:0;top:0">
<path d="M7 8L15 16M15 8L7 16" stroke="#555" stroke-width="1.1"/>
<circle cx="30" cy="10.5" r="6.2" fill="#eef2f8" stroke="#2b4a8a" stroke-width="2.2"/>
<path d="M27 7.5L30 10.5" stroke="#c44" stroke-width=".8"/>
<path d="M29 9.5L35 15.5" stroke="#f0b020" stroke-width="2.2"/>
<circle cx="35.5" cy="16" r="1.3" fill="#e05050"/>
</svg>
<div class="a" style="left:511px;top:5px;font-size:12px;line-height:14px;color:#1a1a1a">* bond_washer.dxf</div>

</div>
<div class="a" style="left:95px;top:131px;width:1059px;height:24px;background:#ececec"></div>
<svg width="1059" height="24" style="position:absolute;left:95px;top:131px"><defs><clipPath id="ctr"><rect x="1" y="0" width="1042" height="24"/></clipPath></defs><g clip-path="url(#ctr)">
<path d="M1.5 17V24 M11.5 21V24 M21.5 17V24 M31.5 21V24 M41.5 17V24 M51.5 21V24 M61.5 17V24 M71.5 21V24 M81.5 17V24 M91.5 21V24 M101.5 17V24 M111.5 21V24 M121.5 17V24 M131.5 21V24 M141.5 17V24 M151.5 21V24 M161.5 17V24 M171.5 21V24 M181.5 17V24 M191.5 21V24 M201.5 17V24 M211.5 21V24 M221.5 17V24 M231.5 21V24 M241.5 17V24 M251.5 21V24 M261.5 17V24 M271.5 21V24 M281.5 17V24 M291.5 21V24 M301.5 17V24 M311.5 21V24 M321.5 17V24 M331.5 21V24 M341.5 17V24 M351.5 21V24 M361.5 17V24 M371.5 21V24 M381.5 17V24 M391.5 21V24 M401.5 17V24 M411.5 21V24 M421.5 17V24 M431.5 21V24 M441.5 17V24 M451.5 21V24 M461.5 17V24 M471.5 21V24 M481.5 17V24 M491.5 21V24 M501.5 17V24 M511.5 21V24 M521.5 17V24 M531.5 21V24 M541.5 17V24 M551.5 21V24 M561.5 17V24 M571.5 21V24 M581.5 17V24 M591.5 21V24 M601.5 17V24 M611.5 21V24 M621.5 17V24 M631.5 21V24 M641.5 17V24 M651.5 21V24 M661.5 17V24 M671.5 21V24 M681.5 17V24 M691.5 21V24 M701.5 17V24 M711.5 21V24 M721.5 17V24 M731.5 21V24 M741.5 17V24 M751.5 21V24 M761.5 17V24 M771.5 21V24 M781.5 17V24 M791.5 21V24 M801.5 17V24 M811.5 21V24 M821.5 17V24 M831.5 21V24 M841.5 17V24 M851.5 21V24 M861.5 17V24 M871.5 21V24 M881.5 17V24 M891.5 21V24 M901.5 17V24 M911.5 21V24 M921.5 17V24 M931.5 21V24 M941.5 17V24 M951.5 21V24 M961.5 17V24 M971.5 21V24 M981.5 17V24 M991.5 21V24 M1001.5 17V24 M1011.5 21V24 M1021.5 17V24 M1031.5 21V24 M1041.5 17V24" stroke="#3c3c3c" stroke-width="1"/>
<g font-family="Liberation Sans" font-size="9.2" text-anchor="middle" fill="#1e1e1e" stroke="#1e1e1e" stroke-width="0.1"><text x="1.5" y="10">-2</text><text x="21.5" y="10">0</text><text x="41.5" y="10">2</text><text x="61.5" y="10">4</text><text x="81.5" y="10">6</text><text x="101.5" y="10">8</text><text x="121.5" y="10">10</text><text x="141.5" y="10">12</text><text x="161.5" y="10">14</text><text x="181.5" y="10">16</text><text x="201.5" y="10">18</text><text x="221.5" y="10">20</text><text x="241.5" y="10">22</text><text x="261.5" y="10">24</text><text x="281.5" y="10">26</text><text x="301.5" y="10">28</text><text x="321.5" y="10">30</text><text x="341.5" y="10">32</text><text x="361.5" y="10">34</text><text x="381.5" y="10">36</text><text x="401.5" y="10">38</text><text x="421.5" y="10">40</text><text x="441.5" y="10">42</text><text x="461.5" y="10">44</text><text x="481.5" y="10">46</text><text x="501.5" y="10">48</text><text x="521.5" y="10">50</text><text x="541.5" y="10">52</text><text x="561.5" y="10">54</text><text x="581.5" y="10">56</text><text x="601.5" y="10">58</text><text x="621.5" y="10">60</text><text x="641.5" y="10">62</text><text x="661.5" y="10">64</text><text x="681.5" y="10">66</text><text x="701.5" y="10">68</text><text x="721.5" y="10">70</text><text x="741.5" y="10">72</text><text x="761.5" y="10">74</text><text x="781.5" y="10">76</text><text x="801.5" y="10">78</text><text x="821.5" y="10">80</text><text x="841.5" y="10">82</text><text x="861.5" y="10">84</text><text x="881.5" y="10">86</text><text x="901.5" y="10">88</text><text x="921.5" y="10">90</text><text x="941.5" y="10">92</text><text x="961.5" y="10">94</text><text x="981.5" y="10">96</text><text x="1001.5" y="10">98</text><text x="1021.5" y="10">100</text><text x="1041.5" y="10">102</text></g>
</g>
<path d="M355.5 145H367L361.5 150.5Z" transform="translate(0,-131)" fill="#000"/>
</svg>
<svg width="23" height="593" style="position:absolute;left:72px;top:155px"><defs><clipPath id="clr"><rect x="0" y="0" width="23" height="577"/></clipPath></defs><g clip-path="url(#clr)">
<path d="M16 578.5H23 M20 568.5H23 M16 558.5H23 M20 548.5H23 M16 538.5H23 M20 528.5H23 M16 518.5H23 M20 508.5H23 M16 498.5H23 M20 488.5H23 M16 478.5H23 M20 468.5H23 M16 458.5H23 M20 448.5H23 M16 438.5H23 M20 428.5H23 M16 418.5H23 M20 408.5H23 M16 398.5H23 M20 388.5H23 M16 378.5H23 M20 368.5H23 M16 358.5H23 M20 348.5H23 M16 338.5H23 M20 328.5H23 M16 318.5H23 M20 308.5H23 M16 298.5H23 M20 288.5H23 M16 278.5H23 M20 268.5H23 M16 258.5H23 M20 248.5H23 M16 238.5H23 M20 228.5H23 M16 218.5H23 M20 208.5H23 M16 198.5H23 M20 188.5H23 M16 178.5H23 M20 168.5H23 M16 158.5H23 M20 148.5H23 M16 138.5H23 M20 128.5H23 M16 118.5H23 M20 108.5H23 M16 98.5H23 M20 88.5H23 M16 78.5H23 M20 68.5H23 M16 58.5H23 M20 48.5H23 M16 38.5H23 M20 28.5H23 M16 18.5H23 M20 8.5H23 M16 -1.5H23" stroke="#3c3c3c" stroke-width="1"/>
<g font-family="Liberation Sans" font-size="9.2" text-anchor="middle" fill="#1e1e1e" stroke="#1e1e1e" stroke-width="0.1"><text transform="translate(9.1,577.8) rotate(-90)" y="0">-20</text><text transform="translate(9.1,557.8) rotate(-90)" y="0">-18</text><text transform="translate(9.1,537.8) rotate(-90)" y="0">-16</text><text transform="translate(9.1,517.8) rotate(-90)" y="0">-14</text><text transform="translate(9.1,497.8) rotate(-90)" y="0">-12</text><text transform="translate(9.1,477.8) rotate(-90)" y="0">-10</text><text transform="translate(9.1,457.8) rotate(-90)" y="0">-8</text><text transform="translate(9.1,437.8) rotate(-90)" y="0">-6</text><text transform="translate(9.1,417.8) rotate(-90)" y="0">-4</text><text transform="translate(9.1,397.8) rotate(-90)" y="0">-2</text><text transform="translate(9.1,377.8) rotate(-90)" y="0">0</text><text transform="translate(9.1,357.8) rotate(-90)" y="0">2</text><text transform="translate(9.1,337.8) rotate(-90)" y="0">4</text><text transform="translate(9.1,317.8) rotate(-90)" y="0">6</text><text transform="translate(9.1,297.8) rotate(-90)" y="0">8</text><text transform="translate(9.1,277.8) rotate(-90)" y="0">10</text><text transform="translate(9.1,257.8) rotate(-90)" y="0">12</text><text transform="translate(9.1,237.8) rotate(-90)" y="0">14</text><text transform="translate(9.1,217.8) rotate(-90)" y="0">16</text><text transform="translate(9.1,197.8) rotate(-90)" y="0">18</text><text transform="translate(9.1,177.8) rotate(-90)" y="0">20</text><text transform="translate(9.1,157.8) rotate(-90)" y="0">22</text><text transform="translate(9.1,137.8) rotate(-90)" y="0">24</text><text transform="translate(9.1,117.8) rotate(-90)" y="0">26</text><text transform="translate(9.1,97.8) rotate(-90)" y="0">28</text><text transform="translate(9.1,77.8) rotate(-90)" y="0">30</text><text transform="translate(9.1,57.8) rotate(-90)" y="0">32</text><text transform="translate(9.1,37.8) rotate(-90)" y="0">34</text><text transform="translate(9.1,17.8) rotate(-90)" y="0">36</text><text transform="translate(9.1,-2.2) rotate(-90)" y="0">38</text></g>
</g>
<path d="M13 233V244L19 238.5Z" fill="#000"/>
</svg>
<div class="a" style="left:1138px;top:155px;width:16px;height:577px;background:#fafafa"></div>
<div class="a" style="left:1143px;top:282px;width:8px;height:322px;background:#7c7c7c;border-radius:4px"></div>
<div class="a" style="left:95px;top:732px;width:1004px;height:16px;background:#fafafa"></div>
<div class="a" style="left:1099px;top:732px;width:55px;height:16px;background:#ebebeb"></div>
<div class="a" style="left:1119px;top:734px;font-size:12px;line-height:14px;color:#1a1a1a">1 &lt; 10</div>
<div class="a" style="left:281px;top:737px;width:633px;height:8px;background:#7c7c7c;border-radius:4px"></div>
<svg width="1043" height="577" viewBox="0 0 1043 577" style="position:absolute;left:95px;top:155px;background:#000">
<defs><pattern id="dots" x="1" y="8" width="10" height="10" patternUnits="userSpaceOnUse"><rect x="0" y="0" width="1" height="1" fill="#474747"/></pattern></defs>
<path d="M21.5 0V577 M121.5 0V577 M221.5 0V577 M321.5 0V577 M421.5 0V577 M521.5 0V577 M621.5 0V577 M721.5 0V577 M821.5 0V577 M921.5 0V577 M1021.5 0V577 M0 478.5H1043 M0 378.5H1043 M0 278.5H1043 M0 178.5H1043 M0 78.5H1043" stroke="#202020" stroke-width="1" fill="none"/>
<rect x="0" y="0" width="1043" height="577" fill="url(#dots)"/>
<path d="M1 378.5H42 M21.5 358V399" stroke="#c00000" stroke-width="1" fill="none"/>
<rect x="121.5" y="198.5" width="800" height="180" stroke="#fff" stroke-width="2.6" fill="none"/>
<circle cx="221.5" cy="288.5" r="40" stroke="#fff" stroke-width="2.6" fill="none"/>
<circle cx="821.5" cy="288.5" r="40" stroke="#fff" stroke-width="2.6" fill="none"/>
<path d="M100.69999999999999 288.5H942" stroke="#ff0000" stroke-width="1.1" stroke-dasharray="17 7 2 7" fill="none"/>
<path d="M221.5 178V398.5" stroke="#ff0000" stroke-width="1.1" stroke-dasharray="17 7 2 7" stroke-dashoffset="14" fill="none"/>
<path d="M821.5 178V398.5" stroke="#ff0000" stroke-width="1.1" stroke-dasharray="17 7 2 7" stroke-dashoffset="14" fill="none"/>
<g transform="translate(-95,-155)">
<defs><radialGradient id="ring" gradientUnits="userSpaceOnUse" cx="456" cy="393.5" r="39.5">
<stop offset=".77" stop-color="#141a20"/><stop offset=".8" stop-color="#4a5866"/><stop offset=".84" stop-color="#36424e"/><stop offset=".88" stop-color="#6a7a8a"/><stop offset=".92" stop-color="#3c4854"/><stop offset=".96" stop-color="#505e6c"/><stop offset="1" stop-color="#222a32"/></radialGradient></defs>
<circle cx="456" cy="393.5" r="35.2" fill="none" stroke="url(#ring)" stroke-width="8"/>
<g transform="translate(401.3 323.5) rotate(45)">
<rect x="0" y="0" width="177" height="20.7" fill="none" stroke="#6a8ad8" stroke-width="1" stroke-dasharray="5 4"/>
<text x="1.5" y="20.6" font-family="Liberation Sans" font-size="27.5" fill="#fff" textLength="174" lengthAdjust="spacingAndGlyphs">104.24o.02.4B</text>
</g>
<path d="M440.6 393.3H471.6M455.9 377.8V408" stroke="#a8a8a8" stroke-width="3"/>
<circle cx="457" cy="397" r="4.5" fill="none" stroke="#e0a800" stroke-width=".8" stroke-dasharray="1.5 1.5"/>
<circle cx="456" cy="394" r="1.6" fill="#222"/>
<text x="464.8" y="410.5" font-family="Liberation Sans" font-size="13" fill="#f0bc00">Grid</text>
</g>

</svg>
<!-- command -->
<div class="a" style="left:72px;top:748px;width:1082px;height:2px;background:#c4c4c4"></div>
<div class="a" style="left:72px;top:750px;width:1082px;height:20px;background:#fff"></div>
<div class="a" style="left:77px;top:751px;font-size:13px;line-height:15px;color:#1b1bd8"><i>Command:</i> paste</div>
<div class="a" style="left:72px;top:770px;width:1082px;height:1px;background:#c4c4c4"></div>
<div class="a" style="left:73px;top:778px;font-size:13px;line-height:15px;color:#1a1a1a">Position:</div>
<div class="a" style="left:128px;top:776px;width:999px;height:18px;background:#fff"></div>
<div class="a" style="left:1127px;top:772px;width:26px;height:25px;border:1px solid #d0d0d0;background:linear-gradient(#f0f0f0,#fafafa)"></div>
<div class="a" style="left:1133px;top:780px;width:14px;height:10px;border:1px solid #333;border-top:3px solid #111;background:#eee"></div>
<div class="a" style="left:1153px;top:108px;width:2px;height:690px;background:#c2c2c2"></div>
<!-- layer panel -->
<div class="a" style="left:1155px;top:108px;width:300px;height:690px;background:#fff">
<div class="a" style="left:0;top:0;width:300px;height:22px;background:linear-gradient(#ededed,#dcdcdc)"></div>
<svg width="300" height="48" style="position:absolute;left:0;top:0">
<circle cx="9" cy="10" r="7" fill="#6e6e6e"/><path d="M6 7L12 13M12 7L6 13" stroke="#fff" stroke-width="1.8"/>
<circle cx="27" cy="10" r="7" fill="#6e6e6e"/><rect x="23.5" y="9" width="5.5" height="4.5" fill="none" stroke="#fff" stroke-width="1.1"/><path d="M25.5 9V7H31V11.5H29" fill="none" stroke="#fff" stroke-width="1.1"/>
</svg>
<div class="a" style="left:142px;top:4px;font-size:12px;line-height:14px;color:#222">Layer List</div>
<div class="a" style="left:0;top:22px;width:300px;height:26px;background:#a9a9a9"></div>
<div class="a" style="left:1.5px;top:23px;width:58px;height:24px;background:linear-gradient(#fafafa,#ececec)"></div>
<div class="a" style="left:61.5px;top:23px;width:58px;height:24px;background:linear-gradient(#fafafa,#ececec)"></div>
<div class="a" style="left:121.5px;top:23px;width:58px;height:24px;background:linear-gradient(#fafafa,#ececec)"></div>
<div class="a" style="left:181.5px;top:23px;width:58px;height:24px;background:linear-gradient(#fafafa,#ececec)"></div>
<div class="a" style="left:241.5px;top:23px;width:57.5px;height:24px;background:linear-gradient(#fafafa,#ececec)"></div>
<svg width="300" height="130" style="position:absolute;left:0;top:0">
<defs>
<g id="eye"><ellipse rx="7.5" ry="5.3" fill="#000"/><ellipse cx="0" cy="1" rx="4.9" ry="3.3" fill="#fff"/><circle cy="-.3" r="3.1" fill="#000"/><circle cx="-1" cy="-1.3" r=".9" fill="#777"/></g>
<g id="lock"><path d="M-3.4 -.5V-3.2A3.4 3.4 0 0 1 3.4 -3.2V-.5" fill="none" stroke="#b6b6b6" stroke-width="1.5"/><rect x="-4.75" y="-.5" width="9.5" height="7.8" fill="#b6b6b6"/></g>
<g id="pen"><path d="M-6 6L5 -5" stroke="#7a5010" stroke-width="3.6" stroke-linecap="round"/><path d="M-5.6 5.6L4.5 -4.5" stroke="#f0b040" stroke-width="2.2" stroke-linecap="round"/><path d="M4 -4L5.5 -5.5" stroke="#e02020" stroke-width="3.2" stroke-linecap="round"/><path d="M-7 7L-5.5 4.5L-4.5 5.5Z" fill="#333"/></g>
</defs>
<use href="#eye" x="30" y="35"/>
<g opacity=".35"><use href="#eye" x="90" y="35"/></g>
<path d="M142.5 35H155.5M149 28.5V41.5" stroke="#e80000" stroke-width="3.2"/>
<rect x="203" y="33.5" width="12" height="3.2" fill="#e80000"/>
<use href="#pen" x="270" y="35"/>
<use href="#eye" x="268" y="58.5"/><use href="#lock" x="290" y="58.5"/>
<use href="#eye" x="268" y="78.5"/><use href="#lock" x="290" y="78.5"/>
<use href="#eye" x="268" y="98.5"/><use href="#lock" x="290" y="98.5"/>
<use href="#eye" x="268" y="118.5"/><use href="#lock" x="290" y="118.5"/>
<use href="#pen" x="246" y="119"/>
</svg>
<div class="lrow" style="top:51px"><div class="sw" style="background:#fff"></div><div class="nm">0</div></div>
<div class="lrow" style="top:71px"><div class="sw" style="background:#ff0000"></div><div class="nm">Center</div></div>
<div class="lrow" style="top:91px"><div class="sw" style="background:#000"></div><div class="nm">Hidden</div></div>
<div class="lrow" style="top:111px"><div class="sw" style="background:#fff"></div><div class="nm">Visible</div></div>

</div>
<!-- right dock -->
<div class="a" style="left:1454px;top:108px;width:46px;height:690px;background:linear-gradient(90deg,#b8b8b8 0,#b8b8b8 1px,#ececec 2px,#d2d2d2 40px,#c0c0c0 46px)">
<svg width="46" height="400" style="position:absolute;left:0;top:0">
<g fill="#9a9a9a"><rect x="8" y="8" width="2" height="2"/><rect x="14" y="8" width="2" height="2"/><rect x="20" y="8" width="2" height="2"/><rect x="26" y="8" width="2" height="2"/><rect x="32" y="8" width="2" height="2"/></g>
<rect x="2.3" y="12" width="43" height="43" rx="6" fill="#b9b9b9"/>
<path d="M4 153.5H44" stroke="#555" stroke-width="1.2" stroke-dasharray="1.2 1.8"/>
<rect x="2.3" y="310" width="43" height="41" rx="6" fill="#b9b9b9"/>
</svg>
<div class="dockic" style="top:19px"></div>
<div class="dockic" style="top:66px"></div>
<div class="dockic" style="top:112px"></div>
<div class="dockic" style="top:168px"></div>
<div class="dockic" style="top:214px"></div>
<div class="dockic" style="top:260px"></div>
<div class="dockic" style="top:316px"></div>
<div class="dockic" style="top:363px"></div>
<svg width="46" height="400" style="position:absolute;left:0;top:0">
<!-- 1 layer icon -->
<path d="M16 33.5L20 31.5V40.5L16 42.5Z" fill="#a0a0a0" stroke="#555" stroke-width=".6"/>
<path d="M19 31.5L30 27.5V37.5L19 41.5Z" fill="#fff" stroke="#444" stroke-width=".7"/>
<path d="M22.5 38.5L26.5 31.5L27 37Z" fill="none" stroke="#e84a4a" stroke-width=".8"/>
<!-- 2 block icon -->
<rect x="16.2" y="76" width="10.6" height="7.8" fill="#f6e8b8" stroke="#6a6a6a" stroke-width=".6"/>
<circle cx="25.3" cy="83.2" r="4.5" fill="#f6e8b8" fill-opacity=".85" stroke="#777" stroke-width=".6"/>
<!-- 3 -->
<rect x="14" y="120" width="16" height="12" rx="2" fill="#f0f0f0" stroke="#a8c0e0" stroke-width=".8"/>
<!-- 4 list -->
<rect x="13" y="177" width="4" height="3" fill="#000"/><rect x="19" y="177" width="13" height="2.5" fill="#fff" stroke="#333" stroke-width=".5"/>
<rect x="13" y="183" width="4" height="3" fill="#000"/><rect x="19" y="183" width="13" height="2.5" fill="#fff" stroke="#333" stroke-width=".5"/>
<rect x="13" y="189" width="4" height="3" fill="#000"/><rect x="19" y="189" width="13" height="2.5" fill="#fff" stroke="#333" stroke-width=".5"/>
<!-- 5 filter -->
<path d="M14 223H31L24.5 231V238L20.5 236V231Z" fill="#9a9a9a" stroke="#555" stroke-width=".6"/>
<!-- 6 camera -->
<path d="M14 270V285" stroke="#d05050" stroke-width=".7"/>
<path d="M15 276L21 272V284L15 280Z" fill="none" stroke="#777" stroke-width=".6"/>
<rect x="21" y="273" width="11" height="9" fill="#9a9a9a" stroke="#666" stroke-width=".6"/>
<!-- 7 command -->
<path d="M12 324.5H21M12 328H20M12 331.5H22M12 334.8H23" stroke="#9a9a9a" stroke-width=".8" stroke-dasharray="2 .6"/>
<path d="M10 338.6H36" stroke="#333" stroke-width=".6"/>
<path d="M12 341.5H14M20 341.5H32" stroke="#888" stroke-width=".9"/>
<!-- 8 clipboard -->
<rect x="16.2" y="372.3" width="12.9" height="13.5" rx="1" fill="#c88a2a" stroke="#9a6a1a" stroke-width=".5"/>
<rect x="17.8" y="373.8" width="9.7" height="10.5" fill="#f4f4f4"/>
<path d="M19 377H26M19 379H26M19 381H24" stroke="#c8c8c8" stroke-width=".6"/>
<rect x="20" y="370.8" width="5.5" height="3" rx=".6" fill="#9a9a90"/>
</svg>

</div>
<!-- status -->
<div class="a status">
<div class="st" style="left:2px;top:9px">34,14</div>
<div class="st" style="left:3px;top:28px">-</div>
<div class="a" style="left:253px;top:5px;width:1px;height:39px;background:#8a8a8a"></div>
<div class="st" style="left:256px;top:9px">36.7696&lt;22°</div>
<div class="st" style="left:257px;top:28px">-</div>
<div class="a" style="left:506.5px;top:21px;width:6px;height:6px;border-radius:3px;background:#c6c6c6"></div>
<div class="st" style="left:662.5px;top:19px">Position</div>
<svg width="20" height="32" style="position:absolute;left:716px;top:7px">
<path d="M1.5 10Q1.5 1 10 1Q18.5 1 18.5 10V20Q18.5 29.5 10 29.5Q1.5 29.5 1.5 20Z" fill="#fff" stroke="#555" stroke-width=".9"/>
<path d="M1.5 13.5Q10 11 18.5 13.5" fill="none" stroke="#555" stroke-width="1.1"/>
<rect x="8.5" y="2.5" width="3" height="8" rx="1.5" fill="#fff" stroke="#555" stroke-width=".9"/>
<path d="M10 10.5V12" stroke="#555" stroke-width=".9"/>
</svg>
<div class="st" style="left:754px;top:19px">Cancel</div>
<div class="a" style="left:940.5px;top:21px;width:6px;height:6px;border-radius:3px;background:#c6c6c6"></div>
<div class="st" style="left:949px;top:19px">No entities selected.</div>
<div class="a" style="left:1269.5px;top:21px;width:6px;height:6px;border-radius:3px;background:#c6c6c6"></div>

</div>
</body></html>
